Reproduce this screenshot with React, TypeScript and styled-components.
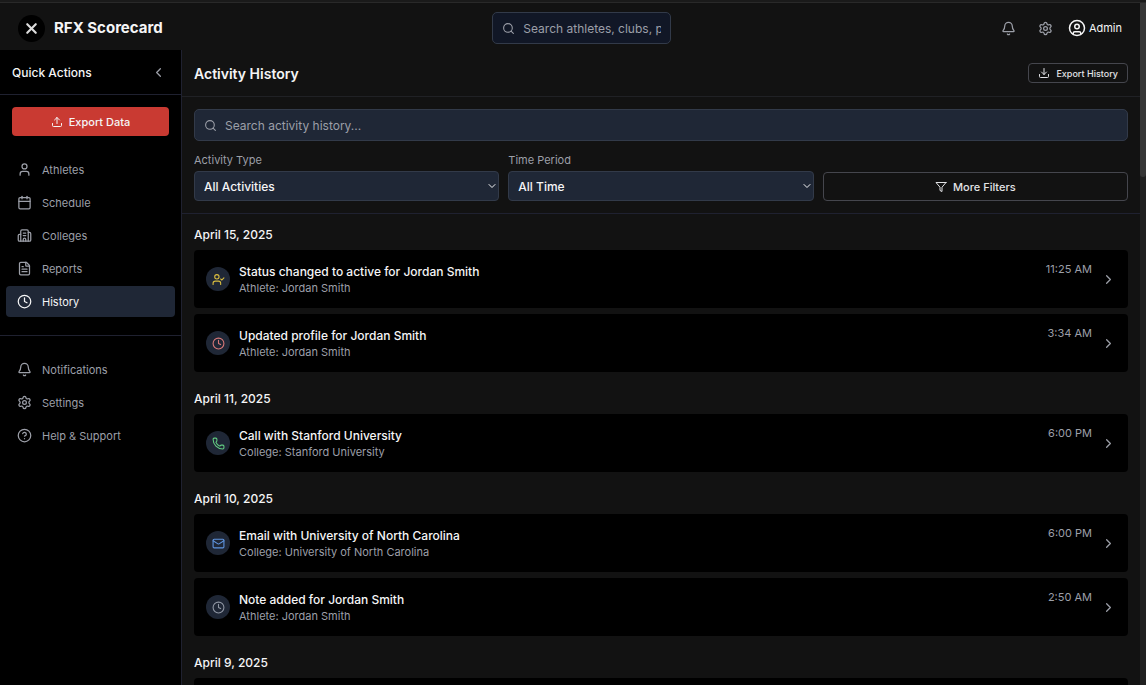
import React from 'react';
import styled, { createGlobalStyle } from 'styled-components';
import {
  Bell, Building2, Calendar, ChevronDown, ChevronLeft, ChevronRight, CircleHelp, CircleUser,
  Clock, Download, FileText, Mail, Phone, Search, Settings, Upload, User, UserCheck, X,
  type LucideIcon,
} from 'lucide-react';

const c = {
  page: '#121212',
  black: '#000000',
  line: '#1f2130',
  slate: '#1f2736',
  slateLine: '#323a49',
  outline: '#45464d',
  text: '#f5f5f6',
  muted: '#9c9fa8',
  red: '#c93a32',
};

const Global = createGlobalStyle`
  * { box-sizing: border-box; }
  html, body { margin: 0; background: ${c.page}; }
  body, button, input, select { font-family: Inter, "Liberation Sans", sans-serif; }
  body { color: ${c.text}; font-size: 12px; }
  h1, h2, h3, p { margin: 0; }
  svg { display: block; flex: none; }
`;

const Page = styled.div`
  height: 100vh;
  display: flex;
  flex-direction: column;
  overflow: hidden;
`;
const TopEdge = styled.div`
  flex: none;
  height: 3px;
  background: #1a1a1a;
  border-bottom: 1px solid #292929;
`;
const Viewport = styled.div`
  flex: 1;
  min-height: 0;
  display: flex;
`;
const Shell = styled.div`
  flex: 1;
  min-width: 0;
  display: flex;
  flex-direction: column;
`;
const ScrollTrack = styled.div`
  width: 6px;
  background: #202020;
`;
const ScrollThumb = styled.div`
  height: 174px;
  background: #363636;
  border-radius: 0 0 3px 3px;
`;

const TopBar = styled.header`
  flex: none;
  height: 47px;
  padding: 3px 18px 0;
  display: flex;
  align-items: center;
  justify-content: space-between;
`;
const Brand = styled.div`
  display: flex;
  align-items: center;
  gap: 9px;
  h1 { font-size: 15px; line-height: 24px; font-weight: 700; }
`;
const Logo = styled.span`
  width: 27px;
  height: 27px;
  border-radius: 50%;
  background: ${c.black};
  color: #dcdcdc;
  display: grid;
  place-items: center;
`;
const Account = styled.div`
  display: flex;
  align-items: center;
  gap: 22px;
`;
const IconButton = styled.button`
  border: 0;
  padding: 0;
  background: none;
  color: ${c.muted};
  cursor: pointer;
`;
const AdminButton = styled(IconButton)`
  display: flex;
  align-items: center;
  gap: 3px;
  margin-left: -7px;
  color: ${c.text};
  font-size: 11px;
`;

const SearchBox = styled.label<{ $compact?: boolean }>`
  width: ${p => (p.$compact ? '179px' : 'auto')};
  height: 32px;
  display: flex;
  align-items: center;
  gap: 8px;
  padding: 0 9px;
  border: 1px solid ${c.slateLine};
  border-radius: 5px;
  background: ${p => (p.$compact ? '#111726' : c.slate)};
  color: ${c.muted};
  input {
    flex: 1;
    min-width: 0;
    padding: 0;
    border: 0;
    outline: 0;
    background: none;
    color: ${c.text};
    font-size: 12px;
  }
  input::placeholder { color: ${c.muted}; opacity: 1; }
`;

const Body = styled.div`
  flex: 1;
  min-height: 0;
  display: flex;
`;
const Sidebar = styled.aside`
  flex: none;
  width: 182px;
  background: ${c.black};
  border-right: 1px solid ${c.line};
`;
const SidebarHead = styled.div`
  height: 45px;
  padding: 0 15px 0 12px;
  display: flex;
  align-items: center;
  justify-content: space-between;
  border-bottom: 1px solid ${c.line};
  h2 { font-size: 12px; font-weight: 500; }
`;
const ExportArea = styled.div`
  padding: 12px 12px 0;
`;
const ExportData = styled.button`
  width: 100%;
  height: 29px;
  border: 0;
  border-radius: 4px;
  background: ${c.red};
  color: ${c.text};
  font-size: 11px;
  font-weight: 500;
  display: flex;
  align-items: center;
  justify-content: center;
  gap: 6px;
`;
const Nav = styled.nav`
  padding: 18px 6px;
  display: flex;
  flex-direction: column;
  gap: 2px;
  & + & { border-top: 1px solid ${c.line}; }
`;
const NavLink = styled.a<{ $active?: boolean }>`
  height: 31px;
  padding: 0 11px;
  display: flex;
  align-items: center;
  gap: 10px;
  border-radius: 4px;
  font-size: 11px;
  text-decoration: none;
  color: ${p => (p.$active ? c.text : c.muted)};
  background: ${p => (p.$active ? c.slate : 'none')};
`;

const Main = styled.main`
  flex: 1;
  min-width: 0;
  overflow-y: auto;
  scrollbar-width: none;
`;
const MainHead = styled.div`
  height: 47px;
  padding: 0 12px;
  display: flex;
  align-items: center;
  justify-content: space-between;
  border-bottom: 1px solid #202125;
  h2 { font-size: 14px; font-weight: 600; }
`;
const OutlineButton = styled.button<{ $small?: boolean }>`
  height: ${p => (p.$small ? 20 : 29)}px;
  padding: 0 9px;
  display: flex;
  align-items: center;
  justify-content: center;
  gap: 6px;
  border: 1px solid ${c.outline};
  border-radius: 4px;
  background: none;
  color: #e2e3e6;
  font-size: ${p => (p.$small ? 9 : 11)}px;
  font-weight: 500;
`;
const Filters = styled.section`
  padding: 12px;
  border-bottom: 1px solid ${c.line};
`;
const FilterRow = styled.div`
  margin-top: 12px;
  display: grid;
  grid-template-columns: repeat(3, 1fr);
  gap: 9px;
  align-items: end;
`;
const Field = styled.label`
  display: block;
  color: ${c.muted};
  font-size: 11px;
  line-height: 15px;
`;
const SelectWrap = styled.span`
  position: relative;
  display: block;
  margin-top: 3px;
  select {
    display: block;
    appearance: none;
    width: 100%;
    height: 30px;
    padding: 0 9px;
    border: 1px solid ${c.slateLine};
    border-radius: 4px;
    background: ${c.slate};
    color: ${c.text};
    font-size: 12px;
    font-weight: 500;
  }
  svg {
    position: absolute;
    right: 1px;
    top: 9px;
    color: ${c.text};
    pointer-events: none;
  }
`;

const Timeline = styled.div`
  padding: 12px;
  display: flex;
  flex-direction: column;
  gap: 18px;
`;
const Day = styled.section`
  display: flex;
  flex-direction: column;
  gap: 6px;
  h3 { font-size: 12px; line-height: 18px; font-weight: 500; }
`;
const Card = styled.article`
  height: 58px;
  padding: 12px;
  display: flex;
  align-items: center;
  gap: 9px;
  border-radius: 4px;
  background: ${c.black};
`;
const Badge = styled.span<{ $color: string }>`
  width: 24px;
  height: 24px;
  border-radius: 50%;
  background: ${c.slate};
  color: ${p => p.$color};
  display: grid;
  place-items: center;
`;
const Details = styled.div`
  flex: 1;
  min-width: 0;
  h4 { margin: 0; font-size: 12px; line-height: 17px; font-weight: 500; }
  p { color: ${c.muted}; font-size: 11px; line-height: 16px; }
`;
const Time = styled.time`
  align-self: flex-start;
  color: ${c.muted};
  font-size: 11px;
  line-height: 15px;
`;

const FilterIcon = () => (
  <svg width="12" height="12" viewBox="0 0 24 24" fill="none" stroke="currentColor" strokeWidth="2" strokeLinecap="round" strokeLinejoin="round">
    <polygon points="22 3 2 3 10 12.46 10 19 14 21 14 12.46 22 3" />
  </svg>
);

type NavItem = { label: string; icon: LucideIcon; active?: boolean };
const primaryNav: NavItem[] = [
  { label: 'Athletes', icon: User },
  { label: 'Schedule', icon: Calendar },
  { label: 'Colleges', icon: Building2 },
  { label: 'Reports', icon: FileText },
  { label: 'History', icon: Clock, active: true },
];
const secondaryNav: NavItem[] = [
  { label: 'Notifications', icon: Bell },
  { label: 'Settings', icon: Settings },
  { label: 'Help & Support', icon: CircleHelp },
];

type Entry = { title: string; sub: string; time: string; icon: LucideIcon; color: string };
type DayData = { date: string; entries: Entry[]; loading?: boolean };
const days: DayData[] = [
  {
    date: 'April 15, 2025',
    entries: [
      { title: 'Status changed to active for Jordan Smith', sub: 'Athlete: Jordan Smith', time: '11:25 AM', icon: UserCheck, color: '#d9bd3f' },
      { title: 'Updated profile for Jordan Smith', sub: 'Athlete: Jordan Smith', time: '3:34 AM', icon: Clock, color: '#d77878' },
    ],
  },
  {
    date: 'April 11, 2025',
    entries: [
      { title: 'Call with Stanford University', sub: 'College: Stanford University', time: '6:00 PM', icon: Phone, color: '#62cc82' },
    ],
  },
  {
    date: 'April 10, 2025',
    entries: [
      { title: 'Email with University of North Carolina', sub: 'College: University of North Carolina', time: '6:00 PM', icon: Mail, color: '#5f95e0' },
      { title: 'Note added for Jordan Smith', sub: 'Athlete: Jordan Smith', time: '2:50 AM', icon: Clock, color: '#8f96a3' },
    ],
  },
  { date: 'April 9, 2025', entries: [], loading: true },
];

const NavList = ({ items, label }: { items: NavItem[]; label: string }) => (
  <Nav aria-label={label}>
    {items.map(({ label: text, icon: Icon, active }) => (
      <NavLink key={text} href="#" $active={active} aria-current={active ? 'page' : undefined}>
        <Icon size={15} strokeWidth={2} />
        {text}
      </NavLink>
    ))}
  </Nav>
);

const SelectField = ({ label, value }: { label: string; value: string }) => (
  <Field>
    {label}
    <SelectWrap>
      <select defaultValue={value}>
        <option>{value}</option>
      </select>
      <ChevronDown size={12} />
    </SelectWrap>
  </Field>
);

export default function App() {
  return (
    <Page>
      <Global />
      <TopEdge />
      <Viewport>
        <Shell>
          <TopBar>
            <Brand>
              <Logo><X size={17} strokeWidth={3} /></Logo>
              <h1>RFX Scorecard</h1>
            </Brand>
            <SearchBox $compact>
              <Search size={13} />
              <input type="text" placeholder="Search athletes, clubs, programs..." aria-label="Search" />
            </SearchBox>
            <Account>
              <IconButton aria-label="Notifications"><Bell size={15} /></IconButton>
              <IconButton aria-label="Settings"><Settings size={15} /></IconButton>
              <AdminButton><CircleUser size={18} />Admin</AdminButton>
            </Account>
          </TopBar>
          <Body>
            <Sidebar>
              <SidebarHead>
                <h2>Quick Actions</h2>
                <IconButton aria-label="Collapse sidebar"><ChevronLeft size={15} /></IconButton>
              </SidebarHead>
              <ExportArea>
                <ExportData><Upload size={12} />Export Data</ExportData>
              </ExportArea>
              <NavList items={primaryNav} label="Primary" />
              <NavList items={secondaryNav} label="Secondary" />
            </Sidebar>
            <Main>
              <MainHead>
                <h2>Activity History</h2>
                <OutlineButton $small><Download size={12} />Export History</OutlineButton>
              </MainHead>
              <Filters>
                <SearchBox>
                  <Search size={13} />
                  <input type="text" placeholder="Search activity history..." aria-label="Search activity history" />
                </SearchBox>
                <FilterRow>
                  <SelectField label="Activity Type" value="All Activities" />
                  <SelectField label="Time Period" value="All Time" />
                  <OutlineButton><FilterIcon />More Filters</OutlineButton>
                </FilterRow>
              </Filters>
              <Timeline>
                {days.map(day => (
                  <Day key={day.date}>
                    <h3>{day.date}</h3>
                    {day.entries.map(({ title, sub, time, icon: Icon, color }) => (
                      <Card key={title}>
                        <Badge $color={color}><Icon size={13} /></Badge>
                        <Details>
                          <h4>{title}</h4>
                          <p>{sub}</p>
                        </Details>
                        <Time>{time}</Time>
                        <IconButton aria-label="Open entry"><ChevronRight size={15} /></IconButton>
                      </Card>
                    ))}
                    {day.loading && <Card aria-busy="true" />}
                  </Day>
                ))}
              </Timeline>
            </Main>
          </Body>
        </Shell>
        <ScrollTrack><ScrollThumb /></ScrollTrack>
      </Viewport>
    </Page>
  );
}
